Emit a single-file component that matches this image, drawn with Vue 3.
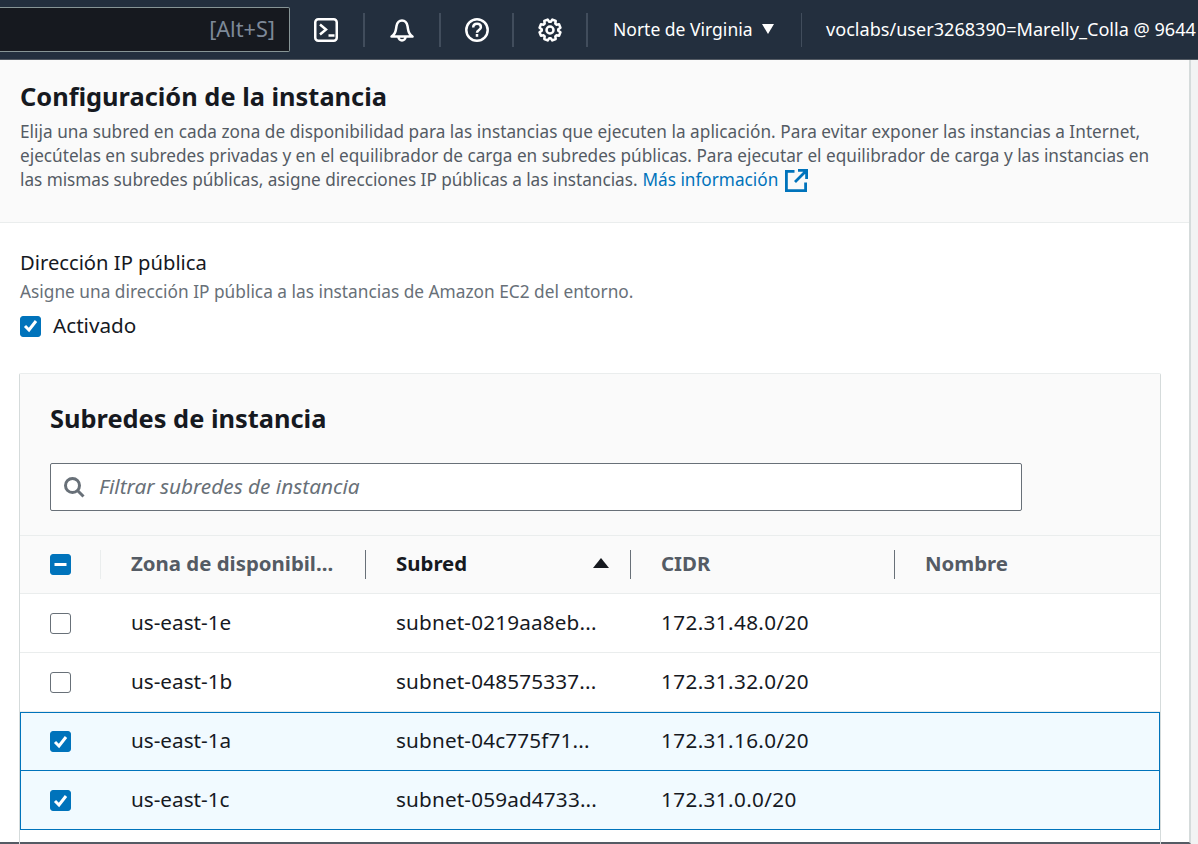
<script setup>
const columns = [
  { label: 'Zona de disponibil...' },
  { label: 'Subred', sorted: true },
  { label: 'CIDR' },
  { label: 'Nombre' },
]

const rows = [
  { zone: 'us-east-1e', subnet: 'subnet-0219aa8eb...', cidr: '172.31.48.0/20', selected: false },
  { zone: 'us-east-1b', subnet: 'subnet-048575337...', cidr: '172.31.32.0/20', selected: false },
  { zone: 'us-east-1a', subnet: 'subnet-04c775f71...', cidr: '172.31.16.0/20', selected: true },
  { zone: 'us-east-1c', subnet: 'subnet-059ad4733...', cidr: '172.31.0.0/20', selected: true },
]

// 8 teeth round the centre of a 24px box
const gearPoints = () => {
  const pts = []
  for (let i = 0; i < 8; i++) {
    const a = (i * Math.PI) / 4 + Math.PI / 8
    for (const [off, r] of [[-0.3, 8.3], [-0.17, 10.7], [0.17, 10.7], [0.3, 8.3]]) {
      pts.push(`${(12 + r * Math.cos(a + off)).toFixed(2)},${(12 + r * Math.sin(a + off)).toFixed(2)}`)
    }
  }
  return pts.join(' ')
}
</script>

<template>
  <div class="page">
    <header class="nav">
      <div class="search"><span>[Alt+S]</span></div>
      <div class="nav-icon first">
        <svg width="24" height="24" viewBox="0 0 24 24" fill="none" stroke="#fff" stroke-width="2.500">
          <rect x="1.250" y="1.250" width="21.500" height="21.500" rx="3" />
          <path d="M6 6.500l6 5-6 5M14.500 17.500h6" />
        </svg>
      </div>
      <div class="nav-icon bell">
        <svg width="24" height="24" viewBox="0 0 24 24" fill="none" stroke="#fff" stroke-width="2.500" stroke-linejoin="round">
          <path d="M1.500 18.500c2.500-1.500 4-4 4.500-7.500l.5-3c.6-3 2.700-5.500 5.500-5.500s4.900 2.500 5.500 5.500l.5 3c.5 3.500 2 6 4.500 7.500z" />
          <path d="M8.500 19a3.500 3.500 0 0 0 7 0" />
        </svg>
      </div>
      <div class="nav-icon help">
        <svg width="24" height="24" viewBox="0 0 24 24" fill="none" stroke="#fff" stroke-width="2.500">
          <circle cx="12" cy="12" r="10.700" />
          <path d="M8.200 9.600c0-2.300 1.600-3.800 3.900-3.800 2.200 0 3.800 1.400 3.800 3.400 0 2.900-3.900 2.700-3.900 5.600" />
          <path d="M12 16v2.800" />
        </svg>
      </div>
      <div class="nav-icon gear">
        <svg width="24" height="24" viewBox="0 0 24 24" fill="none" stroke="#fff" stroke-width="2.500" stroke-linejoin="round">
          <polygon :points="gearPoints()" />
          <circle cx="12" cy="12" r="3.500" />
        </svg>
      </div>
      <div class="region">
        <span>Norte de Virginia</span>
        <i class="caret"></i>
      </div>
      <div class="user">voclabs/user3268390=Marelly_Colla @ 9644</div>
    </header>

    <main class="panel">
      <section class="head">
        <h2>Configuración de la instancia</h2>
        <p>
          <span class="line-wide">Elija una subred en cada zona de disponibilidad para las instancias que ejecuten la aplicación. Para evitar exponer las instancias a Internet,</span><br>
          ejecútelas en subredes privadas y en el equilibrador de carga en subredes públicas. Para ejecutar el equilibrador de carga y las instancias en<br>
          <span class="line-tight">las mismas subredes públicas, asigne direcciones IP públicas a las instancias.</span>
          <a class="link">Más información
            <svg width="23" height="23" viewBox="0 0 23 23" fill="none" stroke="#0073bb" stroke-width="2.800">
              <path d="M9.500 2.400H1.400v19.200h19.200v-8.100M13 1.400h8.600V10M21 2L10 13" />
            </svg>
          </a>
        </p>
      </section>

      <section class="body">
        <div class="field-label">Dirección IP pública</div>
        <div class="field-desc">Asigne una dirección IP pública a las instancias de Amazon EC2 del entorno.</div>
        <label class="toggle">
          <span class="box on">
            <svg width="21" height="21" viewBox="0 0 21 21" fill="none" stroke="#fff" stroke-width="3"><path d="M5 11l4 4 7-9" /></svg>
          </span>
          <span class="toggle-text">Activado</span>
        </label>

        <div class="card">
          <div class="card-top">
            <h3>Subredes de instancia</h3>
            <div class="filter">
              <svg width="24" height="24" viewBox="0 0 24 24" fill="none" stroke="#687078" stroke-width="3">
                <circle cx="10.500" cy="10.500" r="7" />
                <path d="M15.500 15.500l6 6" />
              </svg>
              <span>Filtrar subredes de instancia</span>
            </div>
          </div>
          <div class="thead grid">
            <div class="cell check">
              <span class="box on">
                <svg width="21" height="21" viewBox="0 0 21 21" stroke="#fff" stroke-width="3"><path d="M4.500 10.500h12" /></svg>
              </span>
            </div>
            <div v-for="col in columns" :key="col.label" class="cell th">
              <span :class="{ dark: col.sorted }">{{ col.label }}</span>
              <i v-if="col.sorted" class="sort"></i>
            </div>
          </div>
          <div v-for="row in rows" :key="row.zone" class="row grid" :class="{ selected: row.selected }">
            <div class="cell check">
              <span class="box" :class="{ on: row.selected }">
                <svg v-if="row.selected" width="21" height="21" viewBox="0 0 21 21" fill="none" stroke="#fff" stroke-width="3"><path d="M5 11l4 4 7-9" /></svg>
              </span>
            </div>
            <div class="cell">{{ row.zone }}</div>
            <div class="cell subnet">{{ row.subnet }}</div>
            <div class="cell cidr">{{ row.cidr }}</div>
            <div class="cell"></div>
          </div>
        </div>
      </section>
    </main>
  </div>
</template>

<style>
html, body {
  margin: 0;
  background: #f2f3f3;
  overflow: hidden;
}
</style>

<style scoped>
.page {
  width: 1198px;
  height: 844px;
  overflow: hidden;
  font-family: "Noto Sans", "Open Sans", sans-serif;
  color: #16191f;
  position: relative;
}

.nav {
  height: 59px;
  background: #232f3e;
  display: flex;
  align-items: center;
  white-space: nowrap;
  border-bottom: 1px solid #545b64;
}

.search {
  flex: none;
  width: 290px;
  height: 45px;
  box-sizing: border-box;
  background: #16191f;
  border: 1px solid #879596;
  border-left: none;
  border-radius: 0 2px 2px 0;
  display: flex;
  align-items: center;
  justify-content: flex-end;
  padding: 0 14px 2px 0;
  color: #7d8998;
  font-size: 21.700px;
}

.nav-icon {
  flex: none;
  height: 34px;
  display: flex;
  align-items: center;
  justify-content: center;
  border-right: 2px solid #414d5c;
  box-sizing: border-box;
}
.first { width: 75px; padding-right: 1px; }
.bell { width: 76px; }
.help { width: 73px; }
.gear { width: 74px; }

.region {
  flex: none;
  width: 214px;
  height: 34px;
  box-sizing: border-box;
  padding: 0 0 2px 25px;
  display: flex;
  align-items: center;
  color: #fff;
  font-size: 17.500px;
  border-right: 1px solid #414d5c;
}
.caret {
  margin-left: 9px;
  border-left: 6.500px solid transparent;
  border-right: 6.500px solid transparent;
  border-top: 10px solid #fff;
}

.user {
  padding: 0 0 2px 24px;
  color: #fff;
  font-size: 18.100px;
}

.panel {
  width: 1191px;
  height: 784px;
  box-sizing: border-box;
  background: #fff;
  border-right: 2px solid #d5dbdb;
  border-bottom: 2px solid #545b64;
}

.head {
  height: 163px;
  box-sizing: border-box;
  background: #fafafa;
  border-bottom: 1px solid #eaeded;
  padding: 19px 20px 0;
}
.head h2 {
  margin: 0 0 7px;
  font-size: 25.400px;
  line-height: 34px;
  font-weight: 700;
}
.head p {
  margin: 0;
  font-size: 17.200px;
  line-height: 24px;
  color: #545b64;
  white-space: nowrap;
}
.line-wide {
  letter-spacing: 0.035px;
}
.line-tight {
  letter-spacing: -0.030px;
}
.link {
  color: #0073bb;
  display: inline-flex;
  align-items: center;
  gap: 7px;
  margin-left: 5px;
  vertical-align: top;
}

.body {
  padding: 25px 28px 0 19px;
}
.field-label {
  padding-left: 1px;
  font-size: 20.200px;
  line-height: 28px;
}
.field-desc {
  padding-left: 1px;
  margin-top: 4px;
  font-size: 17.300px;
  line-height: 24px;
  color: #687078;
}
.toggle {
  display: flex;
  align-items: center;
  gap: 12px;
  padding-left: 1px;
  margin-top: 7px;
  font-size: 20.700px;
  line-height: 28px;
}
.toggle-text {
  padding-bottom: 2px;
}

.box {
  flex: none;
  width: 21px;
  height: 21px;
  box-sizing: border-box;
  border: 1.500px solid #687078;
  border-radius: 3px;
  background: #fff;
  display: block;
  position: relative;
}
.box svg {
  position: absolute;
  inset: -1.500px;
}
.box.on {
  background: #0073bb;
  border-color: #0073bb;
}

.card {
  margin-top: 32px;
  border-top: 1px solid #eaeded;
  border-left: 1px solid #d5dbdb;
  border-right: 1px solid #d5dbdb;
  border-radius: 2px 2px 0 0;
  height: 600px;
}
.card-top {
  background: #fafafa;
  padding: 27px 30px 24px;
  border-bottom: 1px solid #eaeded;
}
.card-top h3 {
  margin: 0 0 28px;
  font-size: 25.400px;
  line-height: 34px;
  font-weight: 700;
}
.filter {
  width: 972px;
  height: 48px;
  box-sizing: border-box;
  background: #fff;
  border: 1px solid #687078;
  border-radius: 2px;
  display: flex;
  align-items: center;
  gap: 13px;
  padding-left: 11px;
  font-size: 20.800px;
  font-style: italic;
  color: #687078;
}
.filter span {
  padding-bottom: 2px;
}

.grid {
  display: grid;
  grid-template-columns: 81px 265px 265px 264px 1fr;
}
.thead {
  height: 58px;
  box-sizing: border-box;
  background: #fafafa;
  border-bottom: 1px solid #eaeded;
}
.cell {
  display: flex;
  align-items: center;
  padding: 0 0 3px 30px;
  font-size: 20.700px;
}
.subnet {
  letter-spacing: 0.170px;
}
.cidr {
  letter-spacing: 0.380px;
}
.check {
  padding-bottom: 0;
}
.th {
  font-size: 20.400px;
  font-weight: 700;
  color: #545b64;
  position: relative;
  padding: 0 22px 4px 30px;
  justify-content: space-between;
}
.th::before {
  content: "";
  position: absolute;
  left: -1px;
  top: 14px;
  bottom: 14px;
  width: 1px;
  background: #687078;
}
.th:nth-child(2)::before {
  background: #eaeded;
}
.dark {
  color: #16191f;
}
.sort {
  border-left: 8px solid transparent;
  border-right: 8px solid transparent;
  border-bottom: 10px solid #16191f;
}

.row {
  height: 59px;
  box-sizing: border-box;
  border-bottom: 1px solid #eaeded;
}
.selected {
  background: #f1faff;
  border-bottom: none;
  box-shadow: inset 0 0 0 1px #0073bb;
}
.selected + .selected {
  box-shadow: inset 1px 0 0 #0073bb, inset -1px 0 0 #0073bb, inset 0 -1px 0 #0073bb;
}
</style>
